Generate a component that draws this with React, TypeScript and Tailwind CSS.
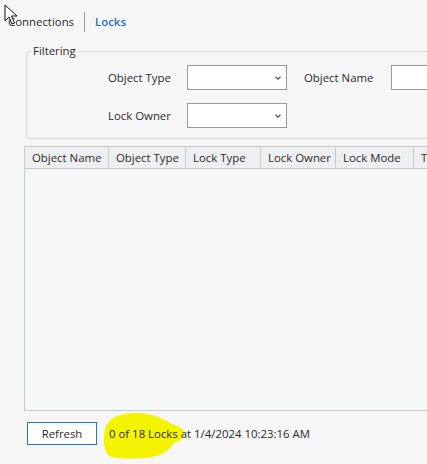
import React from 'react';

const columns = [
    { title: 'Object Name', w: 'w-[84px]' },
    { title: 'Object Type', w: 'w-[77px]' },
    { title: 'Lock Type', w: 'w-[75px]' },
    { title: 'Lock Owner', w: 'w-[75px]' },
    { title: 'Lock Mode', w: 'w-[78px]' },
    { title: 'Time', w: 'w-[80px]' },
];

const Chevron = () => (
    <svg className="w-[8px] h-[8px] text-[#555]" viewBox="0 0 8 8" fill="none" stroke="currentColor" strokeWidth="1.3">
        <path d="M1.5 2.8 L4 5.2 L6.5 2.8" />
    </svg>
);

const Combo = () => (
    <div className="w-[100px] h-[25px] bg-white border border-[#9a9a9a] flex items-center justify-end pr-[4px]">
        <Chevron />
    </div>
);

const App = () => {
    return (
        <div
            className="relative w-[427px] h-[464px] overflow-hidden bg-[#f5f6f5] text-[11.4px] text-[#2b2b2b]"
            style={{ fontFamily: '"Open Sans", "Noto Sans", sans-serif' }}
        >
            {/* tabs */}
            <div className="flex items-center h-[20px] mt-[12px] pl-[8px]">
                <span>Connections</span>
                <span className="mx-[10px] w-px h-[20px] bg-[#9a9a9a]" />
                <span className="font-semibold text-[#1b72c0]">Locks</span>
            </div>

            {/* filter group */}
            <fieldset className="ml-[26px] mt-[11px] w-[440px] h-[96px] border border-[#d6d6d6] rounded-[4px]">
                <legend className="ml-[4px] px-[2px] leading-[16px]">Filtering</legend>
                <div className="pl-[81px] pt-[6px] flex flex-col gap-[13px]">
                    <div className="flex items-center">
                        <span className="w-[79px]">Object Type</span>
                        <Combo />
                        <span className="ml-[17px] w-[87px]">Object Name</span>
                        <div className="w-[120px] h-[25px] bg-white border border-[#9a9a9a]" />
                    </div>
                    <div className="flex items-center">
                        <span className="w-[79px]">Lock Owner</span>
                        <Combo />
                    </div>
                </div>
            </fieldset>

            {/* locks grid */}
            <div className="ml-[24px] mt-[7px] w-[440px] h-[265px] border border-[#c9c9c9] bg-[#f6f7f7] flex flex-col">
                <div className="flex h-[22px] bg-[#eeeff0] border-b border-[#c9c9c9]">
                    {columns.map((c) => (
                        <div key={c.title} className={`${c.w} shrink-0 border-r border-[#c9c9c9] pl-[7px] flex items-center whitespace-nowrap`}>
                            {c.title}
                        </div>
                    ))}
                </div>
            </div>

            {/* footer */}
            <div className="flex items-center mt-[11px] ml-[27px]">
                <button className="w-[70px] h-[23px] bg-white border border-[#1a78d0] text-[#2b2b2b]">Refresh</button>
                <div className="relative ml-[12px]">
                    <svg className="absolute left-[-5px] top-[-12px] w-[82px] h-[46px]" viewBox="0 0 82 46">
                        <path
                            d="M4 10 C8 3 20 0 32 0 C46 0 56 4 66 10 C72 13 78 14 80 18 C82 24 76 28 70 30 C66 36 60 42 48 44 C34 46 18 46 8 44 C2 42 0 36 0 28 C0 20 1 14 4 10 Z"
                            fill="#f4f400"
                        />
                    </svg>
                    <span className="relative">0 of 18 Locks at 1/4/2024 10:23:16 AM</span>
                </div>
            </div>

            {/* mouse pointer */}
            <svg className="absolute left-[4px] top-[4px] w-[14px] h-[22px]" viewBox="0 0 14 22">
                <path d="M1 1 L1 17 L5 13 L8 20 L10.5 19 L7.5 12 L13 12 Z" fill="#fff" stroke="#111" strokeWidth="1" strokeLinejoin="round" />
            </svg>
        </div>
    );
};

export default App;
